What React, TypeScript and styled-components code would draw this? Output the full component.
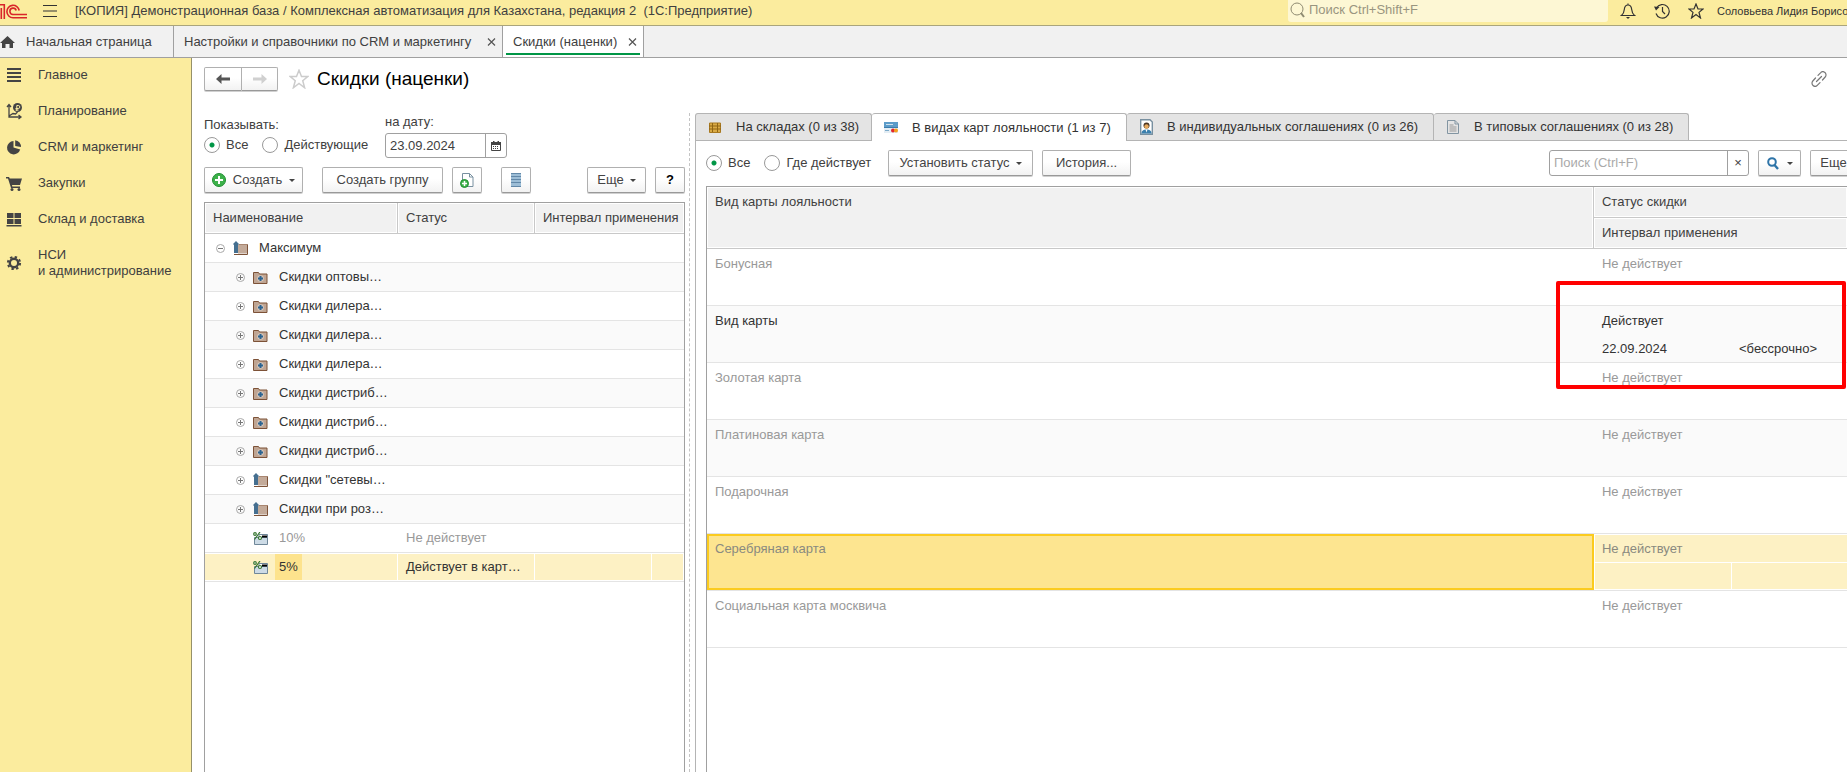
import React from 'react';
import styled, { createGlobalStyle, css } from 'styled-components';

const GlobalStyle = createGlobalStyle`
  *, *::before, *::after { box-sizing: border-box; }
  body {
    margin: 0;
    overflow: hidden;
    background: #fff;
    color: #404040;
    font: 13px/16px "Liberation Sans", Arial, sans-serif;
  }
  button, input { font: inherit; color: inherit; }
  svg { display: block; flex: none; }
`;

const line = '#a0a0a0';

const Page = styled.div`
  display: flex;
  flex-direction: column;
  min-height: 100vh;
`;

const TopBar = styled.header`
  display: flex;
  align-items: center;
  height: 26px;
  padding-bottom: 4px;
  background: #fbec9e;
  border-bottom: 1px solid #aaa57c;
  white-space: nowrap;
`;

const IconButton = styled.button`
  display: flex;
  padding: 0;
  border: 0;
  background: none;
`;

const MenuButton = styled(IconButton)`
  margin: 0 18px 0 16px;
`;

const AppTitle = styled.div`
  flex: 1;
  white-space: pre;
`;

const GlobalSearch = styled.label`
  display: flex;
  align-items: center;
  gap: 4px;
  width: 320px;
  height: 22px;
  padding: 0 2px 2px;
  background: #fdf7d4;
  border-radius: 0 0 3px 3px;
  color: #8f8b72;
`;

const BareInput = styled.input`
  flex: 1;
  min-width: 0;
  padding: 0;
  border: 0;
  outline: 0;
  background: none;
  &::placeholder { color: #999580; opacity: 1; }
`;

const TopActions = styled.div`
  display: flex;
  gap: 18px;
  margin: 0 13px 0 12px;
`;

const UserName = styled.div`
  width: 130px;
  font-size: 11px;
  color: #333;
`;

const WindowTabs = styled.nav`
  display: flex;
  height: 32px;
  background: #f1f1f1;
  border-bottom: 1px solid ${line};
`;

const WindowTab = styled.div<{ $w: number; $active?: boolean; $home?: boolean }>`
  position: relative;
  display: flex;
  align-items: center;
  justify-content: space-between;
  width: ${p => p.$w}px;
  padding: ${p => (p.$home ? '0' : '0 6px 0 10px')};
  border-right: 1px solid ${line};
  background: ${p => (p.$active ? '#fff' : 'transparent')};
  white-space: nowrap;
  ${p => p.$active && css`
    &::after {
      content: '';
      position: absolute;
      left: 3px;
      right: 3px;
      bottom: 2px;
      height: 2px;
      background: #009646;
    }
  `}
`;

const TabLink = styled.a`
  display: flex;
  align-items: center;
  gap: 11px;
  color: inherit;
  text-decoration: none;
`;

const Workspace = styled.div`
  display: flex;
  flex: 1;
`;

const Sidebar = styled.nav`
  display: flex;
  flex: none;
  flex-direction: column;
  width: 192px;
  background: #fbec9e;
  border-right: 1px solid #969169;
`;

const SidebarLink = styled.a`
  display: flex;
  align-items: center;
  gap: 17px;
  min-height: 36px;
  padding: 0 0 2px 7px;
  color: #404040;
  text-decoration: none;
  white-space: pre-line;
  &:last-child { min-height: 52px; }
`;

const Main = styled.main`
  display: flex;
  flex: 1;
  flex-direction: column;
  min-width: 0;
  overflow: hidden;
`;

const FormHeader = styled.div`
  display: flex;
  align-items: center;
  height: 55px;
  padding: 0 20px 13px 12px;
`;

const Heading = styled.h1`
  flex: 1;
  margin: 0 0 0 8px;
  color: #000;
  font-size: 19px;
  font-weight: 400;
  line-height: 24px;
`;

const Button = styled.button<{ $w: number; $gap?: number }>`
  display: flex;
  flex: none;
  align-items: center;
  justify-content: center;
  gap: ${p => p.$gap ?? 6}px;
  width: ${p => p.$w}px;
  height: 26px;
  padding: 0;
  border: 1px solid #b0b0b0;
  border-bottom-color: #999;
  border-radius: 2px;
  background: linear-gradient(#fff 45%, #f2f2f2);
  box-shadow: 0 1px 0 #d0d0d0;
  color: #444;
  white-space: nowrap;
`;

const NavButtons = styled.div`
  display: flex;
  margin-right: 11px;
  & > button { height: 24px; }
  & > button:first-child { border-radius: 2px 0 0 2px; }
  & > button:last-child { border-left: 0; border-radius: 0 2px 2px 0; }
`;

const Panes = styled.div`
  display: flex;
  flex: 1;
`;

const LeftPane = styled.section`
  display: flex;
  flex: none;
  flex-direction: column;
  width: 498px;
  padding: 0 4px 0 12px;
  border-right: 1px dashed #c4c4c4;
`;

const Filters = styled.div`
  display: flex;
  gap: 15px;
  height: 54px;
`;

const RadioSet = styled.div`
  width: 166px;
  padding-top: 4px;
`;

const RadioRow = styled.div<{ $w?: number }>`
  display: flex;
  flex: none;
  align-items: center;
  gap: 14px;
  width: ${p => (p.$w ? `${p.$w}px` : 'auto')};
`;

const ShowRow = styled(RadioRow)`
  padding-top: 4px;
`;

const RadioLabel = styled.label`
  display: flex;
  align-items: center;
  gap: 6px;
  white-space: nowrap;
`;

const Radio = styled.input.attrs({ type: 'radio' })`
  appearance: none;
  width: 16px;
  height: 16px;
  margin: 0;
  border: 1px solid #999;
  border-radius: 50%;
  background: #fff;
  &:checked { background: radial-gradient(circle, #009646 2px, #fff 3px); }
`;

const DateField = styled.div`
  display: flex;
  flex-direction: column;
  gap: 3px;
  padding-top: 1px;
`;

const FieldBox = styled.div<{ $w: number; $h: number }>`
  display: flex;
  flex: none;
  align-items: stretch;
  width: ${p => p.$w}px;
  height: ${p => p.$h}px;
  padding-left: 4px;
  border: 1px solid ${line};
  border-radius: 3px;
  & input::placeholder { color: #aaa; }
`;

const FieldButton = styled.button`
  display: flex;
  align-items: center;
  justify-content: center;
  width: 21px;
  padding: 0;
  border: 0;
  border-left: 1px solid ${line};
  background: none;
`;

const Toolbar = styled.div`
  display: flex;
  align-items: center;
`;

const LeftToolbar = styled(Toolbar)`
  margin-bottom: 9px;
  & > button:nth-child(2) { margin-left: 19px; }
  & > button:nth-child(3) { margin-left: 9px; }
  & > button:nth-child(4) { margin: 0 auto 0 19px; }
  & > button:nth-child(6) { margin-left: 9px; color: #000; font-weight: 700; }
`;

const TableFrame = styled.div`
  flex: 1;
  border: 1px solid ${line};
  border-bottom: 0;
`;

const Table = styled.table`
  width: 100%;
  table-layout: fixed;
  border-collapse: separate;
  border-spacing: 0;
`;

const Th = styled.th`
  height: 31px;
  padding: 0 0 0 8px;
  border-right: 1px solid #c8c8c8;
  border-bottom: 1px solid #c8c8c8;
  background: #f1f1f1;
  box-shadow: inset 0 0 0 1px #fff;
  font-weight: 400;
  text-align: left;
  white-space: nowrap;
  &:last-child { border-right: 0; }
  &[rowspan] { padding-top: 7px; vertical-align: top; }
`;

const TreeRow = styled.tr<{ $odd?: boolean; $selected?: boolean; $muted?: boolean }>`
  background: ${p => (p.$odd ? '#fafafa' : '#fff')};
  color: ${p => (p.$muted ? '#999' : '#333')};
  & > td {
    height: 29px;
    padding: 0 0 0 8px;
    border-bottom: 1px solid #e4e4e4;
    white-space: nowrap;
    ${p => p.$selected && css`
      background: #fdf1c4;
      box-shadow: inset 0 1px 0 #fff, inset 0 -1px 0 #fff, inset -1px 0 0 #fff;
    `}
  }
`;

const TreeCell = styled.div<{ $level: number }>`
  display: flex;
  align-items: center;
  height: 28px;
  padding-left: ${p => p.$level * 20}px;
`;

const Toggle = styled(IconButton)`
  width: 20px;
  padding-left: 3px;
`;

const NodeName = styled.span<{ $selected?: boolean }>`
  margin-left: 7px;
  padding: 5px 4px;
  background: ${p => (p.$selected ? '#fde38d' : 'transparent')};
`;

const RightPane = styled.section`
  display: flex;
  flex: 1;
  flex-direction: column;
  min-width: 0;
  margin-left: 5px;
`;

const PageTabs = styled.div`
  display: flex;
  height: 28px;
  border-bottom: 1px solid #b4b4b4;
`;

const PageTab = styled.button<{ $w: number; $active?: boolean }>`
  display: flex;
  align-items: center;
  gap: 13px;
  width: ${p => p.$w}px;
  height: ${p => (p.$active ? 28 : 27)}px;
  padding: 0 0 0 11px;
  border: 1px solid #b4b4b4;
  border-width: 1px 1px 0 0;
  border-radius: 3px 3px 0 0;
  background: ${p => (p.$active ? '#fff' : '#e4e4e4')};
  color: #333;
  white-space: nowrap;
  &:first-child { border-left-width: 1px; }
`;

const TabIcon = styled.span`
  display: flex;
  justify-content: center;
  width: 16px;
`;

const TabBody = styled.div`
  display: flex;
  flex: 1;
  flex-direction: column;
  padding: 9px 0 0 10px;
  border-left: 1px solid #b4b4b4;
`;

const RightToolbar = styled(Toolbar)`
  gap: 9px;
  margin: 0 -22px 10px 0;
  & > div:first-child { margin-right: 5px; }
`;

const ToolbarSpacer = styled.div`
  flex: 1;
`;

const CardsFrame = styled.div`
  position: relative;
  flex: 1;
  border: 1px solid ${line};
  border-width: 1px 0 0 1px;
`;

const CardBody = styled.tbody<{ $odd?: boolean; $selected?: boolean; $muted?: boolean }>`
  background: ${p => (p.$odd ? '#fafafa' : '#fff')};
  color: ${p => (p.$muted ? '#999' : '#333')};
  td {
    padding: 0 0 0 8px;
    white-space: nowrap;
  }
  tr:first-child td { height: 29px; }
  tr:last-child td, td[rowspan] {
    height: 28px;
    border-bottom: 1px solid #e4e4e4;
  }
  td[rowspan] { padding-top: 7px; vertical-align: top; }
  ${p => p.$selected && css`
    color: #8a8a80;
    td { background: #fdf1c4; box-shadow: inset 1px 1px 0 #fff; }
    tr:last-child td { box-shadow: inset 1px 0 0 #fff, inset 0 -1px 0 #fff; }
    tr:first-child td:last-child { box-shadow: inset 1px 1px 0 #fff, inset 0 -1px 0 #fff; }
    tr:first-child td[rowspan] { background: #fde590; box-shadow: inset 0 0 0 2px #fbcb1f; }
  `}
`;

const Highlight = styled.div`
  position: absolute;
  top: 94px;
  right: 1px;
  width: 290px;
  height: 108px;
  border: 4px solid #ff0000;
  border-radius: 2px;
  pointer-events: none;
`;

const Caret = () => (
  <svg width="6" height="3" viewBox="0 0 6 3"><path d="M0 0h6L3 3z" fill="#444" /></svg>
);

const Logo = () => (
  <svg width="27" height="16" viewBox="0 0 27 16" fill="none" stroke="#d9252a" strokeWidth="1.600">
    <path d="M0 1.800h4.300V16M1.300 5v11" />
    <path d="M19.200 7.500A6.200 6.200 0 1 0 13 14.700H27" />
    <path d="M16.200 7.500A3.200 3.200 0 1 0 13 11.500H27" />
  </svg>
);

const MenuIcon = () => (
  <svg width="14" height="12" viewBox="0 0 14 12"><path d="M0 .5h14M0 6h14M0 11.500h14" stroke="#333" /></svg>
);

const SearchIcon = () => (
  <svg width="15" height="16" viewBox="0 0 15 16" fill="none" stroke="#8f8b72">
    <circle cx="7" cy="7" r="6" /><path d="m11 11 3 4" strokeWidth="2" />
  </svg>
);

const BellIcon = () => (
  <svg width="16" height="16" viewBox="0 0 16 16" fill="none" stroke="#333" strokeWidth="1.200">
    <path d="M1.500 12.500h13c-2-1.500-2.500-3-2.800-6C11.400 3.500 10 2 8 2S4.600 3.500 4.300 6.500c-.3 3-.8 4.500-2.800 6zM8 .5V2" />
    <path d="M6 14h4l-2 2z" fill="#333" stroke="none" />
  </svg>
);

const HistoryIcon = () => (
  <svg width="16" height="16" viewBox="0 0 16 16" fill="none" stroke="#333" strokeWidth="1.200">
    <path d="M2.500 5A6.800 6.800 0 1 1 2 10.500M8.500 4v4.500l2.500 2.500" />
    <path d="M0 3.500 5.500 4 2 7.500z" fill="#333" stroke="none" />
  </svg>
);

const StarIcon = ({ size, color }: { size: number; color: string }) => (
  <svg width={size} height={size} viewBox="0 0 16 16" fill="none" stroke={color} strokeWidth="1.200">
    <path d="m8 1 2 5h5l-4 3.400L12.500 15 8 11.600 3.500 15 5 9.400 1 6h5z" />
  </svg>
);

const HomeIcon = () => (
  <svg width="15" height="12" viewBox="0 0 15 12"><path d="M7.500 0 15 7h-2v5H9.500V8h-4v4H2V7H0z" fill="#444" /></svg>
);

const CloseIcon = () => (
  <svg width="9" height="8" viewBox="0 0 9 8"><path d="m1 .5 7 7m0-7-7 7" stroke="#555" strokeWidth="1.200" /></svg>
);

const ArrowIcon = ({ back }: { back?: boolean }) => (
  <svg width="14" height="10" viewBox="0 0 14 10">
    <path
      d={back ? 'M5.500 0v3.500H14v3H5.500V10L0 5z' : 'M8.500 0v3.500H0v3h8.500V10L14 5z'}
      fill={back ? '#555' : '#d0d0d0'}
    />
  </svg>
);

const LinkIcon = () => (
  <svg width="16" height="16" viewBox="0 0 16 16" fill="none" stroke="#777" strokeWidth="1.200" strokeLinecap="round">
    <path d="M7 4.300 9.500 1.800a2.800 2.800 0 0 1 4.700 4.200L11.500 9M9 11.700 6.500 14.200A2.800 2.800 0 0 1 1.800 10L4.500 7M5.500 10.500l5-5" />
  </svg>
);

const CalendarIcon = () => (
  <svg width="10" height="10" viewBox="0 0 10 10">
    <path d="M.5 1.500h9v8h-9z" fill="#fff" stroke="#444" />
    <path d="M0 1h10v3H0zM2 0h1.500v2H2zM6.500 0H8v2H6.500z" fill="#444" />
    <path d="M2 5.500h6M2 7.500h6" stroke="#444" strokeDasharray="1 1" />
  </svg>
);

const PlusIcon = () => (
  <svg width="14" height="14" viewBox="0 0 14 14">
    <circle cx="7" cy="7" r="6.500" fill="#3db14a" stroke="#1f8f31" />
    <path d="M7 3v8M3 7h8" stroke="#fff" strokeWidth="2" />
  </svg>
);

const CopyIcon = () => (
  <svg width="14" height="15" viewBox="0 0 14 15">
    <path d="M2.500.5h7l3.500 3.500v9.500H2.500z" fill="#fff" stroke="#7890a0" />
    <path d="M9.500.5V4H13" fill="none" stroke="#7890a0" />
    <circle cx="4.500" cy="10.500" r="4" fill="#3db14a" stroke="#1f8f31" />
    <path d="M4.500 8v5M2 10.500h5" stroke="#fff" strokeWidth="1.500" />
  </svg>
);

const ListIcon = () => (
  <svg width="10" height="14" viewBox="0 0 10 14">
    <path d="M0 0h10v14H0z" fill="#9cbdd6" />
    <path d="M0 .5h10M0 3.500h10M0 6.500h10M0 9.500h10M0 13.500h10" stroke="#6288a8" />
  </svg>
);

const MagnifierIcon = () => (
  <svg width="12" height="13" viewBox="0 0 12 13" fill="none" stroke="#2e74a8">
    <circle cx="5" cy="5" r="3.800" strokeWidth="2" /><path d="m7.500 8 3.500 4" strokeWidth="2.400" />
  </svg>
);

const ToggleIcon = ({ open }: { open?: boolean }) => (
  <svg width="9" height="9" viewBox="0 0 9 9" fill="none">
    <circle cx="4.500" cy="4.500" r="4" stroke="#a8a8a8" />
    <path d={open ? 'M2 4.500h5' : 'M2 4.500h5M4.500 2v5'} stroke="#777" />
  </svg>
);

const FolderPlusIcon = () => (
  <svg width="15" height="13" viewBox="0 0 15 13">
    <path d="M.5 1.500h5l1 1.500h7.500v9.500H.5z" fill="#bfa593" stroke="#7d5237" />
    <circle cx="7.500" cy="7.500" r="3.300" fill="#d6c6ba" />
    <path d="M7.500 5v5M5 7.500h5" stroke="#2b6390" strokeWidth="2" />
  </svg>
);

const FolderUpIcon = () => (
  <svg width="15" height="14" viewBox="0 0 15 14">
    <path d="M5 3.500h9.500v9H5z" fill="#c3aa99" />
    <path d="M6 3.500h8.500" stroke="#a98670" />
    <path d="M14.500 3.500v10H1" fill="none" stroke="#7d5237" />
    <path d="M3 0 6.500 3.500H5V12H1V3.500H-.5z" fill="#456f90" />
  </svg>
);

const DiscountIcon = () => (
  <svg width="15" height="13" viewBox="0 0 15 13">
    <path d="M1.500 5.500h13v7h-13z" fill="#cddbe6" stroke="#6f8799" />
    <path d="M6 2.500h8.500v3H6z" fill="#fff" stroke="#6f8799" />
    <path d="M9 4.500h5" stroke="#000" strokeWidth="2" />
    <g fill="#fff" stroke="#34752f" strokeWidth="1.200">
      <circle cx="2" cy="2" r="1.300" /><circle cx="7" cy="6" r="1.500" /><path d="M7 0 1.500 7.500" />
    </g>
  </svg>
);

const StockIcon = () => (
  <svg width="12" height="11" viewBox="0 0 12 11">
    <path d="M.5 1h11v9.500H.5z" fill="#d9aa45" stroke="#a87920" />
    <path d="M0 4h12M0 7h12M3.500 1v9M8.500 1v9" stroke="#8f6514" />
  </svg>
);

const CardIcon = () => (
  <svg width="14" height="11" viewBox="0 0 14 11">
    <path d="M0 0h14v5H0z" fill="#5c9cc9" /><path d="M0 5h14v6H0z" fill="#e3edf4" />
    <path d="M0 5.500h14" stroke="#3d7dac" /><path d="M2 2.500h7" stroke="#cfe3f0" /><path d="M1 8.500h4" stroke="#7ba9c9" />
    <circle cx="9" cy="8.500" r="2" fill="#e3262d" /><circle cx="12" cy="8.500" r="2" fill="#f4a11c" />
  </svg>
);

const PersonIcon = () => (
  <svg width="13" height="16" viewBox="0 0 13 16">
    <path d="M.7.7H10L12.300 3v12.300H.7z" fill="#fff" stroke="#7890a0" strokeWidth="1.400" />
    <circle cx="6.500" cy="6.500" r="3" fill="#4a3524" /><circle cx="6.500" cy="7.500" r="2.200" fill="#e5a95e" />
    <path d="M1.500 14.500c0-3 2-4 5-4s5 1 5 4z" fill="#3c80ad" /><path d="M5.500 10.500h2l-1 3z" fill="#fff" />
  </svg>
);

const DocIcon = () => (
  <svg width="12" height="14" viewBox="0 0 12 14" fill="none" stroke="#8295a2">
    <path d="M.5.500h7.500l3.500 3.500v9.500H.5zM8 .5V4h3.500" /><path d="M2.500 5h4M2.500 7h7M2.500 9h7M2.500 11h7" stroke="#999" />
  </svg>
);

const SideIcon = ({ children }: { children: React.ReactNode }) => (
  <svg width="14" height="16" viewBox="0 0 14 16" overflow="visible" fill="#444">{children}</svg>
);

const sections = [
  { label: 'Главное', icon: <path d="M0 2h14M0 6h14M0 10h14M0 14h14" stroke="#444" strokeWidth="2" /> },
  {
    label: 'Планирование',
    icon: (
      <g fill="none" stroke="#444" strokeWidth="1.300">
        <path d="M2 1.500v12.500H14M0 4l2-2.500L4 4M11.500 12l2.500 2-2.500 2M2 13l4-2.500L8.500 11l2-2" />
        <circle cx="10.500" cy="4.500" r="4.500" fill="#444" stroke="none" />
        <path d="M9.800 8V2.500h1.500a1.500 1.500 0 0 1 0 3H8.500M8.500 7h3" stroke="#fbec9e" strokeWidth="1" />
      </g>
    ),
  },
  { label: 'CRM и маркетинг', icon: <><path d="M6.500 2v6.500l6.700 2A6.700 6.700 0 1 1 6.500 2z" /><path d="M8.200 1.200A6.500 6.500 0 0 1 14 8l-5.800-1z" /></> },
  { label: 'Закупки', icon: <><path d="M-1 2h3l.8 1.500H15l-2 6.500H5l.3 1.500H13V13H4L1 3.500h-2z" /><circle cx="5" cy="14.500" r="1.500" /><circle cx="12" cy="14.500" r="1.500" /></> },
  { label: 'Склад и доставка', icon: <path d="M0 2h6.500v5H0zM7.500 2H14v5H7.500zM0 8h6.500v5H0zM7.500 8H14v5H7.500zM-.5 14h15v1.500h-15z" /> },
  {
    label: 'НСИ\nи администрирование',
    icon: (
      <g fill="none" stroke="#444">
        <circle cx="7" cy="8" r="4.200" strokeWidth="2.400" />
        <circle cx="7" cy="8" r="6.100" strokeWidth="2" strokeDasharray="2.400 2.390" />
      </g>
    ),
  },
];

type Kind = 'plus' | 'up' | 'discount';
const tree: { name: string; kind: Kind; status?: string }[] = [
  { name: 'Скидки оптовы…', kind: 'plus' },
  { name: 'Скидки дилера…', kind: 'plus' },
  { name: 'Скидки дилера…', kind: 'plus' },
  { name: 'Скидки дилера…', kind: 'plus' },
  { name: 'Скидки дистриб…', kind: 'plus' },
  { name: 'Скидки дистриб…', kind: 'plus' },
  { name: 'Скидки дистриб…', kind: 'plus' },
  { name: 'Скидки "сетевы…', kind: 'up' },
  { name: 'Скидки при роз…', kind: 'up' },
  { name: '10%', kind: 'discount', status: 'Не действует' },
  { name: '5%', kind: 'discount', status: 'Действует в карт…' },
];
const kindIcons = { plus: <FolderPlusIcon />, up: <FolderUpIcon />, discount: <DiscountIcon /> };

const cards = [
  { name: 'Бонусная' },
  { name: 'Вид карты', active: true, from: '22.09.2024', to: '<бессрочно>' },
  { name: 'Золотая карта' },
  { name: 'Платиновая карта' },
  { name: 'Подарочная' },
  { name: 'Серебряная карта', selected: true },
  { name: 'Социальная карта москвича' },
];

const pageTabs = [
  { label: 'На складах (0 из 38)', icon: <StockIcon />, width: 177 },
  { label: 'В видах карт лояльности (1 из 7)', icon: <CardIcon />, width: 255, active: true },
  { label: 'В индивидуальных соглашениях (0 из 26)', icon: <PersonIcon />, width: 307 },
  { label: 'В типовых соглашениях (0 из 28)', icon: <DocIcon />, width: 255 },
];

const DiscountTree = () => (
  <TableFrame>
    <Table>
      <colgroup><col width="193" /><col width="137" /><col width="117" /><col /></colgroup>
      <thead><tr><Th>Наименование</Th><Th>Статус</Th><Th colSpan={2}>Интервал применения</Th></tr></thead>
      <tbody>
        <TreeRow>
          <td colSpan={4}>
            <TreeCell $level={0}>
              <Toggle aria-label="Свернуть"><ToggleIcon open /></Toggle>
              <FolderUpIcon />
              <NodeName>Максимум</NodeName>
            </TreeCell>
          </td>
        </TreeRow>
        {tree.map((node, i) => {
          const selected = i === tree.length - 1;
          return (
            <TreeRow key={i} $odd={i % 2 === 0} $selected={selected} $muted={node.name === '10%'}>
              <td>
                <TreeCell $level={node.kind === 'discount' ? 2 : 1}>
                  {node.kind !== 'discount' && <Toggle aria-label="Развернуть"><ToggleIcon /></Toggle>}
                  {kindIcons[node.kind]}
                  <NodeName $selected={selected}>{node.name}</NodeName>
                </TreeCell>
              </td>
              <td>{node.status}</td><td /><td />
            </TreeRow>
          );
        })}
      </tbody>
    </Table>
  </TableFrame>
);

const LoyaltyCards = () => (
  <CardsFrame>
    <Table>
      <colgroup><col /><col width="137" /><col width="116" /></colgroup>
      <thead>
        <tr><Th rowSpan={2}>Вид карты лояльности</Th><Th colSpan={2}>Статус скидки</Th></tr>
        <tr><Th colSpan={2}>Интервал применения</Th></tr>
      </thead>
      {cards.map((card, i) => (
        <CardBody key={card.name} $odd={i % 2 === 1 && !card.selected} $selected={card.selected} $muted={!card.active}>
          <tr><td rowSpan={2}>{card.name}</td><td colSpan={2}>{card.active ? 'Действует' : 'Не действует'}</td></tr>
          <tr><td>{card.from}</td><td>{card.to}</td></tr>
        </CardBody>
      ))}
    </Table>
    <Highlight />
  </CardsFrame>
);

export default function App() {
  return (
    <Page>
      <GlobalStyle />
      <TopBar>
        <Logo />
        <MenuButton aria-label="Меню"><MenuIcon /></MenuButton>
        <AppTitle>{'[КОПИЯ] Демонстрационная база / Комплексная автоматизация для Казахстана, редакция 2  (1С:Предприятие)'}</AppTitle>
        <GlobalSearch><SearchIcon /><BareInput placeholder="Поиск Ctrl+Shift+F" aria-label="Поиск" /></GlobalSearch>
        <TopActions>
          <IconButton aria-label="Уведомления"><BellIcon /></IconButton>
          <IconButton aria-label="История"><HistoryIcon /></IconButton>
          <IconButton aria-label="Избранное"><StarIcon size={16} color="#333" /></IconButton>
        </TopActions>
        <UserName>Соловьева Лидия Борисов</UserName>
      </TopBar>
      <WindowTabs>
        <WindowTab $w={174} $home><TabLink href="#home"><HomeIcon />Начальная страница</TabLink></WindowTab>
        <WindowTab $w={329}>
          <TabLink href="#crm">Настройки и справочники по CRM и маркетингу</TabLink>
          <IconButton aria-label="Закрыть"><CloseIcon /></IconButton>
        </WindowTab>
        <WindowTab $w={141} $active>
          <TabLink href="#discounts">Скидки (наценки)</TabLink>
          <IconButton aria-label="Закрыть"><CloseIcon /></IconButton>
        </WindowTab>
      </WindowTabs>
      <Workspace>
        <Sidebar>
          {sections.map(s => (
            <SidebarLink href="#section" key={s.label}><SideIcon>{s.icon}</SideIcon><span>{s.label}</span></SidebarLink>
          ))}
        </Sidebar>
        <Main>
          <FormHeader>
            <NavButtons>
              <Button $w={38} aria-label="Назад"><ArrowIcon back /></Button>
              <Button $w={36} aria-label="Вперед"><ArrowIcon /></Button>
            </NavButtons>
            <IconButton aria-label="В избранное"><StarIcon size={20} color="#ccc" /></IconButton>
            <Heading>Скидки (наценки)</Heading>
            <IconButton aria-label="Ссылка"><LinkIcon /></IconButton>
          </FormHeader>
          <Panes>
            <LeftPane>
              <Filters>
                <RadioSet role="radiogroup" aria-labelledby="show-label">
                  <div id="show-label">Показывать:</div>
                  <ShowRow>
                    <RadioLabel><Radio name="show" defaultChecked />Все</RadioLabel>
                    <RadioLabel><Radio name="show" />Действующие</RadioLabel>
                  </ShowRow>
                </RadioSet>
                <DateField>
                  <label htmlFor="date">на дату:</label>
                  <FieldBox $w={122} $h={25}>
                    <BareInput id="date" defaultValue="23.09.2024" />
                    <FieldButton aria-label="Выбрать дату"><CalendarIcon /></FieldButton>
                  </FieldBox>
                </DateField>
              </Filters>
              <LeftToolbar>
                <Button $w={99} $gap={7}><PlusIcon />Создать<Caret /></Button>
                <Button $w={121}>Создать группу</Button>
                <Button $w={30} aria-label="Скопировать"><CopyIcon /></Button>
                <Button $w={30} aria-label="Список"><ListIcon /></Button>
                <Button $w={59}>Еще<Caret /></Button>
                <Button $w={30}>?</Button>
              </LeftToolbar>
              <DiscountTree />
            </LeftPane>
            <RightPane>
              <PageTabs>
                {pageTabs.map(t => (
                  <PageTab key={t.label} $w={t.width} $active={t.active}><TabIcon>{t.icon}</TabIcon>{t.label}</PageTab>
                ))}
              </PageTabs>
              <TabBody>
                <RightToolbar>
                  <RadioRow $w={168} role="radiogroup" aria-label="Карты">
                    <RadioLabel><Radio name="cards" defaultChecked />Все</RadioLabel>
                    <RadioLabel><Radio name="cards" />Где действует</RadioLabel>
                  </RadioRow>
                  <Button $w={145}>Установить статус<Caret /></Button>
                  <Button $w={89}>История...</Button>
                  <ToolbarSpacer />
                  <FieldBox $w={200} $h={26}>
                    <BareInput placeholder="Поиск (Ctrl+F)" aria-label="Поиск по таблице" />
                    <FieldButton aria-label="Очистить">×</FieldButton>
                  </FieldBox>
                  <Button $w={43} $gap={8} aria-label="Найти"><MagnifierIcon /><Caret /></Button>
                  <Button $w={59}>Еще<Caret /></Button>
                </RightToolbar>
                <LoyaltyCards />
              </TabBody>
            </RightPane>
          </Panes>
        </Main>
      </Workspace>
    </Page>
  );
}
